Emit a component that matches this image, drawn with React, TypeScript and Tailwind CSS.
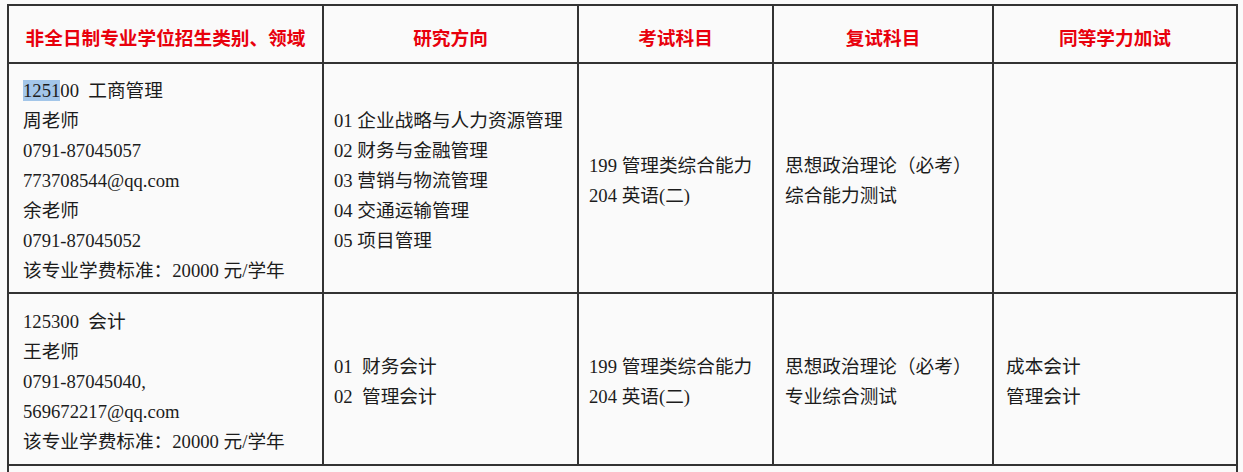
const headers = ['非全日制专业学位招生类别、领域', '研究方向', '考试科目', '复试科目', '同等学力加试'];

const bodyFont = { fontFamily: '"Liberation Serif", "Noto Sans CJK SC", serif' };

function Lines({ items }: { items: string[] }) {
  return (
    <div className="flex flex-col">
      {items.map((t, i) => (
        <span key={i} className="whitespace-pre leading-[30px]">
          {t}
        </span>
      ))}
    </div>
  );
}

export default function App() {
  const cell = 'border-2 border-[#333] align-middle pt-[6px] text-left';

  return (
    <div className="h-[472px] w-[1243px] overflow-hidden bg-[#fafafa] pt-[4px] pl-[7px]">
      <table
        className="w-[1229px] table-fixed border-collapse text-[18.67px] text-[#1c1c1c]"
        style={bodyFont}
      >
        <colgroup>
          <col className="w-[315px]" />
          <col className="w-[255px]" />
          <col className="w-[195px]" />
          <col className="w-[220px]" />
          <col className="w-[244px]" />
        </colgroup>
        <thead>
          <tr className="h-[58px]">
            {headers.map((h) => (
              <th
                key={h}
                className="border-2 border-[#333] pt-[6px] text-center align-middle text-[18.67px] font-bold text-[#e8000c] font-['Noto_Sans_CJK_SC',sans-serif]"
              >
                {h}
              </th>
            ))}
          </tr>
        </thead>
        <tbody>
          <tr className="h-[230px]">
            <td className={`${cell} pl-[14px]`}>
              <div className="flex flex-col">
                <span className="whitespace-pre leading-[30px]">
                  <span className="bg-[#a3c6e9]">1251</span>00  工商管理
                </span>
                <span className="leading-[30px]">周老师</span>
                <span className="leading-[30px]">0791-87045057</span>
                <span className="leading-[30px]">773708544@qq.com</span>
                <span className="leading-[30px]">余老师</span>
                <span className="leading-[30px]">0791-87045052</span>
                <span className="leading-[30px]">该专业学费标准：20000 元/学年</span>
              </div>
            </td>
            <td className={`${cell} pl-[10px]`}>
              <Lines
                items={['01 企业战略与人力资源管理', '02 财务与金融管理', '03 营销与物流管理', '04 交通运输管理', '05 项目管理']}
              />
            </td>
            <td className={`${cell} pl-[10px]`}>
              <Lines items={['199 管理类综合能力', '204 英语(二)']} />
            </td>
            <td className={`${cell} pl-[11px]`}>
              <Lines items={['思想政治理论（必考）', '综合能力测试']} />
            </td>
            <td className={cell}></td>
          </tr>
          <tr className="h-[172px]">
            <td className={`${cell} pl-[14px]`}>
              <Lines
                items={['125300  会计', '王老师', '0791-87045040,', '569672217@qq.com', '该专业学费标准：20000 元/学年']}
              />
            </td>
            <td className={`${cell} pl-[10px]`}>
              <Lines items={['01  财务会计', '02  管理会计']} />
            </td>
            <td className={`${cell} pl-[10px]`}>
              <Lines items={['199 管理类综合能力', '204 英语(二)']} />
            </td>
            <td className={`${cell} pl-[11px]`}>
              <Lines items={['思想政治理论（必考）', '专业综合测试']} />
            </td>
            <td className={`${cell} pl-[12px]`}>
              <Lines items={['成本会计', '管理会计']} />
            </td>
          </tr>
          <tr className="h-[60px]">
            <td colSpan={5} className={cell}></td>
          </tr>
        </tbody>
      </table>
    </div>
  );
}
